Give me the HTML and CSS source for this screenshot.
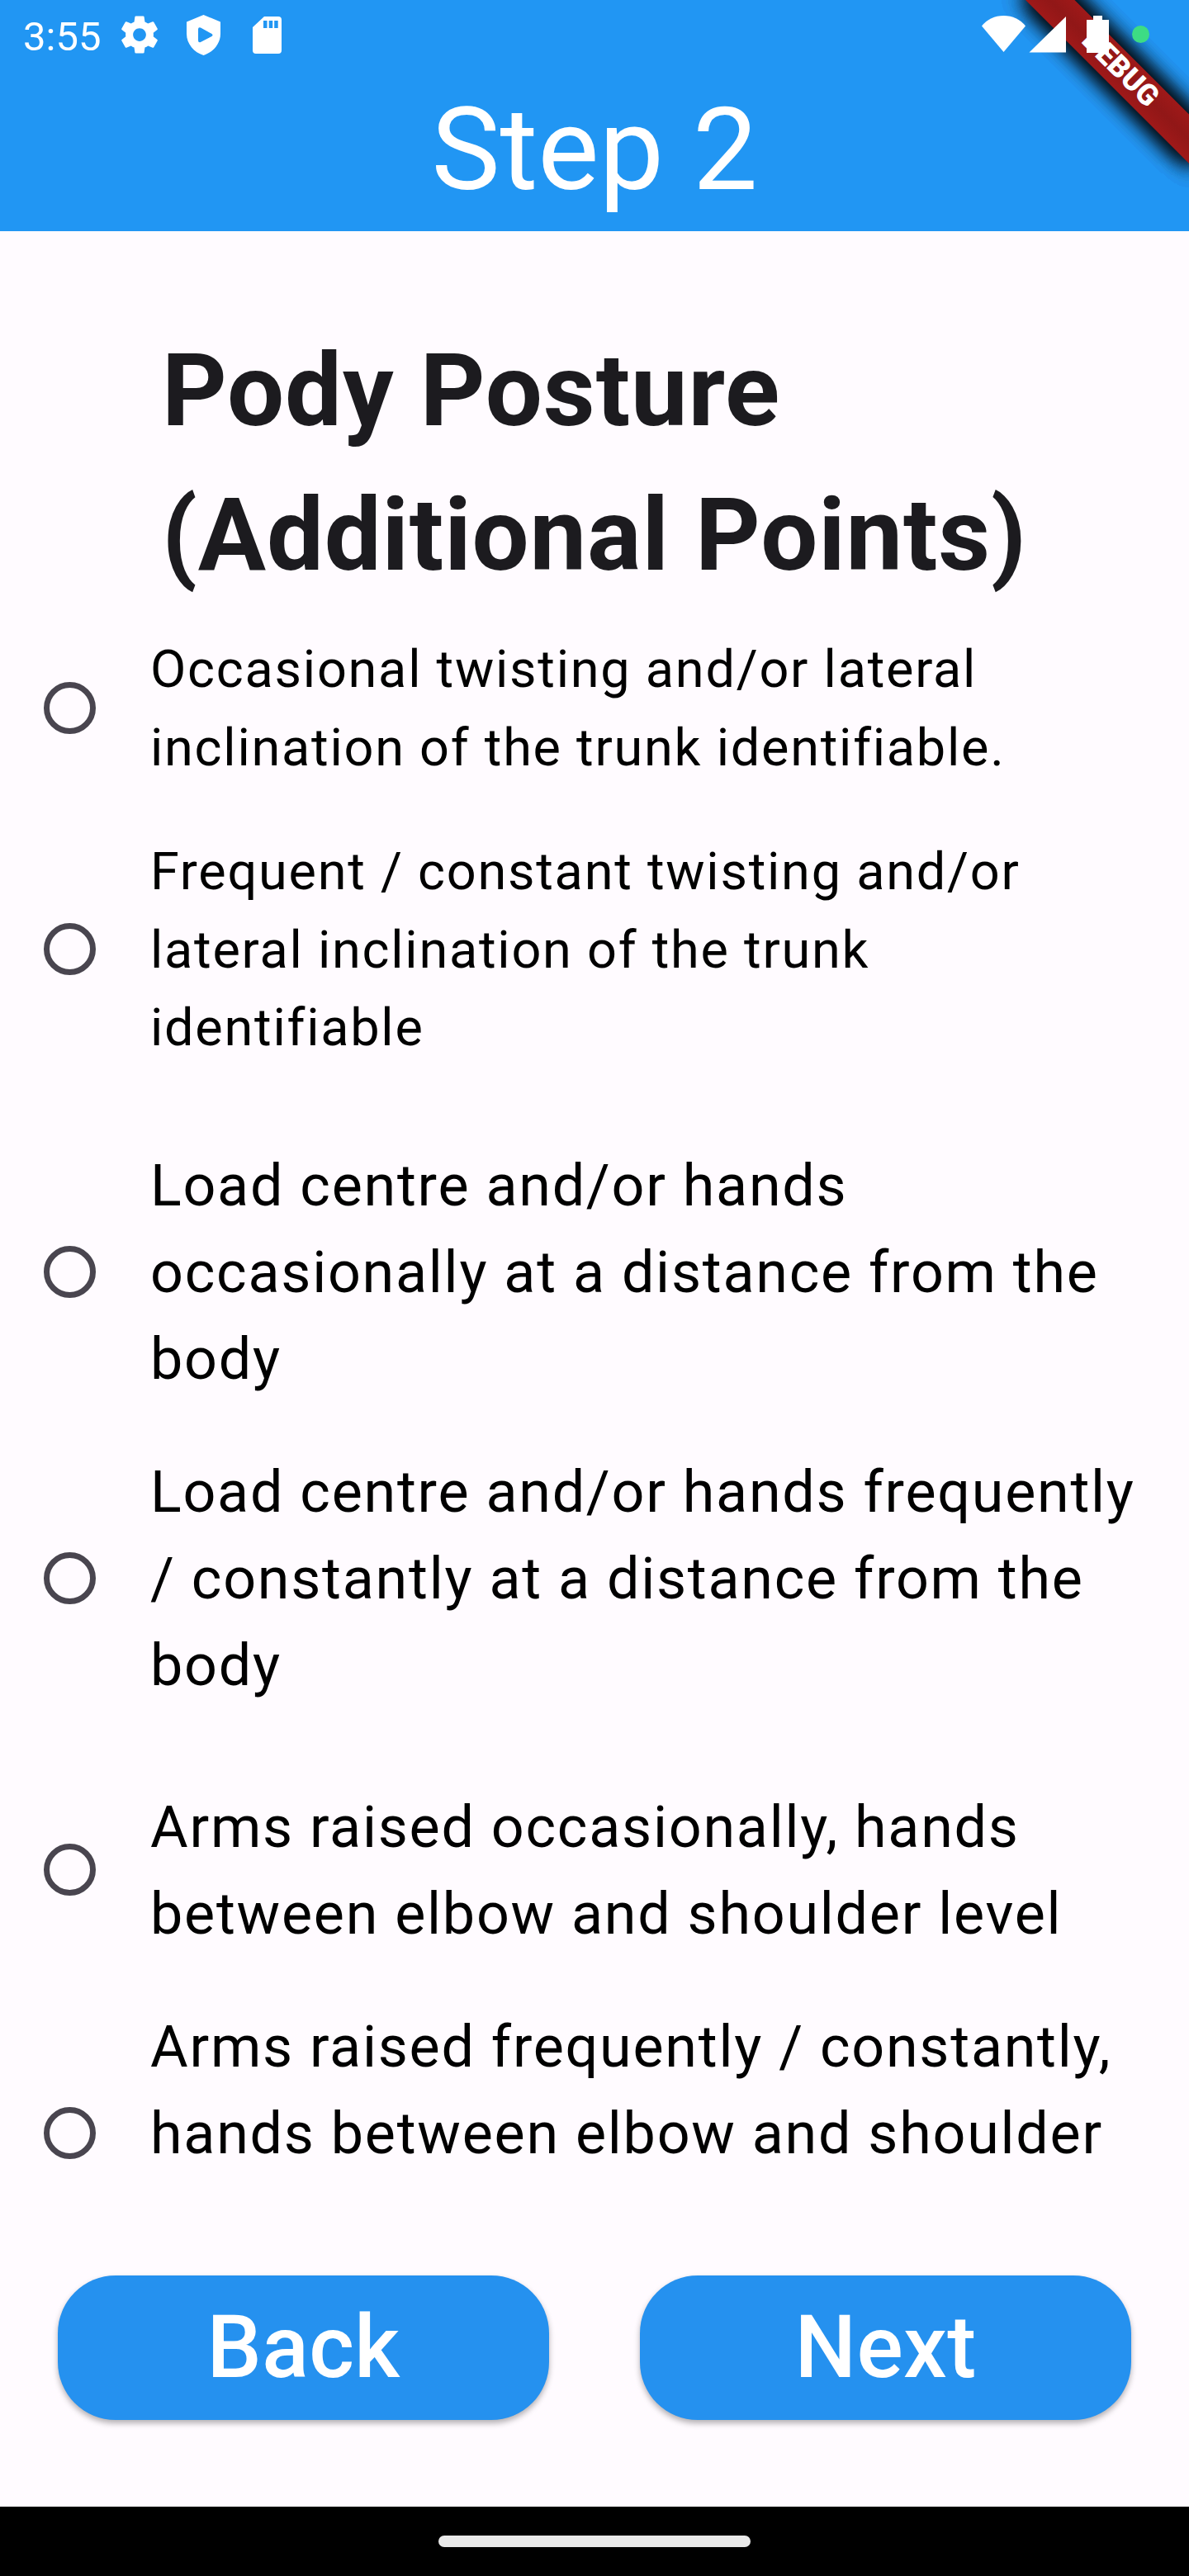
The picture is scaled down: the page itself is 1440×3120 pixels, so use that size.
FILE: index.html
```html
<!DOCTYPE html>
<html lang="en">
<head>
<meta charset="utf-8">
<title>Step 2</title>
<link rel="stylesheet" href="styles.css">
</head>
<body>
<div class="screen">
  <header class="top">
    <div class="status">
      <span class="clock">3:55</span>
      <svg class="ic gear" viewBox="0 0 24 24"><path d="M19.430 12.980c.04-.32.07-.64.07-.98s-.03-.66-.07-.98l2.110-1.650c.19-.15.24-.42.12-.64l-2-3.460c-.12-.22-.39-.3-.61-.22l-2.490 1c-.52-.4-1.080-.73-1.690-.98l-.38-2.650C14.460 2.180 14.250 2 14 2h-4c-.25 0-.46.18-.49.42l-.38 2.650c-.61.25-1.170.59-1.690.98l-2.490-1c-.23-.09-.49 0-.61.22l-2 3.460c-.13.22-.07.49.12.64l2.110 1.650c-.04.32-.07.65-.07.98s.03.66.07.98l-2.110 1.650c-.19.15-.24.42-.12.64l2 3.460c.12.22.39.3.61.22l2.490-1c.52.4 1.080.73 1.690.98l.38 2.650c.03.24.24.42.49.42h4c.25 0 .46-.18.49-.42l.38-2.650c.61-.25 1.170-.59 1.690-.98l2.490 1c.23.09.49 0 .61-.22l2-3.460c.12-.22.07-.49-.12-.64l-2.110-1.650zM12 15.500c-1.930 0-3.500-1.570-3.500-3.500s1.570-3.500 3.500-3.500 3.500 1.570 3.500 3.500-1.570 3.500-3.500 3.500z"/></svg>
      <svg class="ic shield" viewBox="0 0 41 49"><path fill-rule="evenodd" d="M20.500 0 41 8.500V23C41 35 32 45.500 20.500 49 9 45.500 0 35 0 23V8.500ZM14 17.500V31Q14 34 17 33L30.500 26Q32.500 24.500 30.500 23L17 15.500Q14 14.500 14 17.500Z"/></svg>
      <svg class="ic card" viewBox="0 0 35 45"><path fill-rule="evenodd" d="M14 0H31Q35 0 35 4V41Q35 45 31 45H4Q0 45 0 41V13ZM13 5V14H17.500V5ZM19.700 5V14H24.200V5ZM26.200 5V14H30.700V5Z"/></svg>
      <svg class="ic signals" viewBox="0 0 204 45"><path d="M0 12.500Q10 0 26.500 0T53 12.500L26.500 44Z"/><path d="M57.500 44.500 102 1V44.500Z"/><path d="M135 0H146V5H154V45H127V5H135Z"/><circle class="dot" cx="192.500" cy="22.500" r="10.500"/></svg>
    </div>
    <h1 class="title">Step 2</h1>
  </header>
  <main class="body">
    <h2 class="heading">Pody Posture (Additional Points)</h2>
    <div class="options">
      <label class="opt small"><i class="radio"></i><span class="lbl">Occasional twisting and/or lateral inclination of the trunk identifiable.</span></label>
      <label class="opt small gap-s"><i class="radio"></i><span class="lbl">Frequent / constant twisting and/or lateral inclination of the trunk identifiable</span></label>
      <label class="opt gap-l"><i class="radio"></i><span class="lbl">Load centre and/or hands occasionally at a distance from the body</span></label>
      <label class="opt gap-s"><i class="radio"></i><span class="lbl">Load centre and/or hands frequently / constantly at a distance from the body</span></label>
      <label class="opt gap-l"><i class="radio"></i><span class="lbl">Arms raised occasionally, hands between elbow and shoulder level</span></label>
      <label class="opt gap-s"><i class="radio"></i><span class="lbl last">Arms raised frequently / constantly, hands between elbow and shoulder</span></label>
    </div>
  </main>
  <footer class="actions">
    <button class="btn">Back</button>
    <button class="btn">Next</button>
  </footer>
  <nav class="nav"><i class="pill"></i></nav>
  <div class="debug"><div class="turn"><i class="shade"></i><i class="shade"></i><i class="shade"></i><i class="shade"></i><i class="shade"></i><i class="shade"></i><div class="ribbon">DEBUG</div></div></div>
</div>
</body>
</html>
```
FILE: styles.css
```css
* { box-sizing: border-box; }
body { margin: 0; font-family: Roboto, sans-serif; }
.screen {
  position: relative;
  width: 1440px;
  height: 3120px;
  display: flex;
  flex-direction: column;
  background: #fffbff;
  overflow: hidden;
}
.top { height: 280px; flex: none; background: #2196f3; color: #fff; }
.status {
  position: relative;
  z-index: 2;
  height: 84px;
  display: flex;
  align-items: flex-start;
  padding-left: 28px;
}
.clock { width: 114px; font-size: 49px; line-height: 57px; padding-top: 16px; }
.ic { fill: #fff; flex: none; display: block; }
.gear { width: 54px; height: 54px; margin-top: 15px; }
.shield { width: 41px; height: 49px; margin: 18px 0 0 30px; }
.card { width: 35px; height: 45px; margin: 20px 0 0 39px; }
.signals { width: 204px; height: 45px; margin: 19px 47px 0 auto; overflow: visible; }
.dot { fill: #3ddc84; }
.title { margin: 12px 0 0; text-align: center; font-size: 140px; line-height: 170px; font-weight: 400; }
.body { height: 2406px; flex: none; padding-top: 106px; }
.heading {
  margin: 0 180px 0 196px;
  font-size: 122.5px;
  line-height: 175px;
  letter-spacing: .875px;
  font-weight: 700;
  color: #1c1b1f;
}
.options { margin-top: 28px; }
.opt { display: flex; align-items: center; padding: 0 56px 0 52.5px; }
.gap-s { margin-top: 56px; }
.gap-l { margin-top: 91px; }
.radio { flex: none; width: 63px; height: 63px; margin-bottom: 2px; border: 7px solid #49454f; border-radius: 50%; }
.lbl { margin-left: 66.5px; font-size: 70px; line-height: 105px; letter-spacing: 1.75px; color: #000; }
.last { min-height: 315px; }
.small .lbl { font-size: 63px; line-height: 94.5px; }
.actions { height: 350px; flex: none; display: flex; justify-content: space-between; align-items: flex-start; padding: 70px; }
.btn {
  width: 595px;
  height: 175px;
  border: 0;
  padding: 0;
  border-radius: 70px;
  background: #2591ef;
  color: #fff;
  font: 500 105px/150px Roboto, sans-serif;
  letter-spacing: .35px;
  box-shadow: 0 4px 7px rgba(0, 0, 0, .3);
}
.nav { height: 84px; flex: none; background: #000; display: flex; justify-content: center; align-items: center; }
.pill { width: 378px; height: 14px; border-radius: 7px; background: #e9e9e9; }
.debug { position: absolute; top: 0; right: 0; width: 280px; height: 280px; overflow: hidden; z-index: 1; }
.turn { position: absolute; left: 280px; top: 0; width: 0; height: 0; transform: rotate(45deg); }
.shade { position: absolute; left: -140px; top: 98px; width: 280px; height: 42px; background: rgba(0, 0, 0, .5); filter: blur(13.9px); }
.ribbon {
  position: absolute;
  left: -140px;
  top: 98px;
  width: 280px;
  height: 42px;
  background: linear-gradient(#9f1919, #911717 50%, #9f1919);
  color: #fff;
  font-size: 35.7px;
  line-height: 38px;
  font-weight: 900;
  text-align: center;
}
```
